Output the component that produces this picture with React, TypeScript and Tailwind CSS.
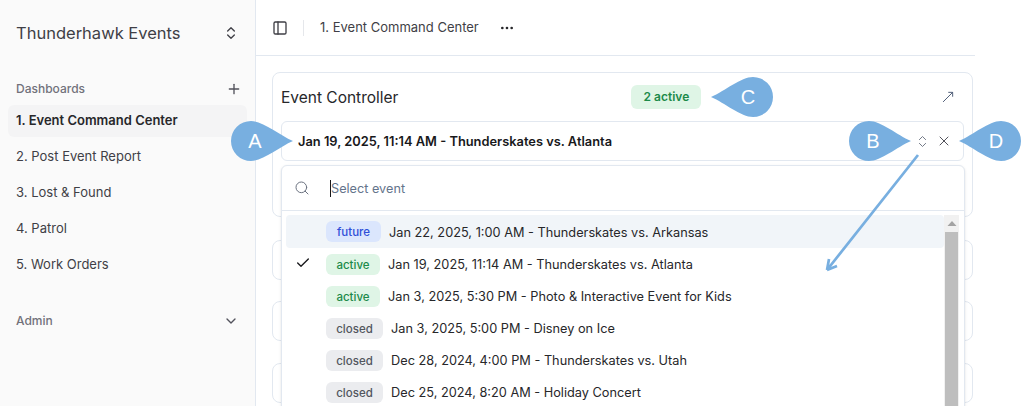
import { Check, ChevronDown, ChevronsUpDown, MoreHorizontal, MoveUpRight, PanelLeft, Plus, Search, X } from "lucide-react";

const navItems = ["1. Event Command Center", "2. Post Event Report", "3. Lost & Found", "4. Patrol", "5. Work Orders"];

const events = [
  { status: "future", label: "Jan 22, 2025, 1:00 AM - Thunderskates vs. Arkansas" },
  { status: "active", label: "Jan 19, 2025, 11:14 AM - Thunderskates vs. Atlanta" },
  { status: "active", label: "Jan 3, 2025, 5:30 PM - Photo & Interactive Event for Kids" },
  { status: "closed", label: "Jan 3, 2025, 5:00 PM - Disney on Ice" },
  { status: "closed", label: "Dec 28, 2024, 4:00 PM - Thunderskates vs. Utah" },
  { status: "closed", label: "Dec 25, 2024, 8:20 AM - Holiday Concert" },
];

function StatusBadge({ status }: { status: string }) {
  const badgeClass =
    status === "future"
      ? "bg-[#dbe6fd] text-[#2f4fd8] w-[55px]"
      : status === "active"
      ? "bg-[#dff5e6] text-[#1c8a4a] w-[54px]"
      : "bg-[#ebecef] text-[#52565e] w-[57px]";
  return (
    <span className={`flex h-[21px] shrink-0 items-center justify-center rounded-md pt-[3px] text-[11.5px] font-medium ${badgeClass}`}>
      {status}
    </span>
  );
}

// teardrop marker, the tip points at the thing it labels
function Callout({ letter, tip, className }: { letter: string; tip: "left" | "right"; className: string }) {
  const d =
    tip === "right"
      ? "M20 0C32 0 48 14 62 20C48 26 32 40 20 40A20 20 0 0 1 20 0Z"
      : "M42 0C30 0 14 14 0 20C14 26 30 40 42 40A20 20 0 0 0 42 0Z";
  return (
    <div className={`absolute flex h-10 w-[62px] items-center justify-center ${className}`}>
      <svg width="62" height="40" viewBox="0 0 62 40" className="absolute inset-0">
        <path d={d} fill="#78afe0" />
      </svg>
      <span
        className={`relative text-[20px] leading-none text-white font-['Liberation_Sans',sans-serif] ${
          tip === "right" ? "mr-[14px]" : "ml-[12px]"
        }`}
      >
        {letter}
      </span>
    </div>
  );
}

export default function App() {
  return (
    <div className="relative flex h-[406px] w-[1022px] overflow-hidden bg-white font-['Inter',sans-serif] text-[#18181b]">
      <aside className="flex w-[256px] shrink-0 flex-col border-r border-[#e2e8f0] bg-[#fafafa] px-2">
        <div className="flex h-[66px] items-center justify-between pl-2 pr-[8px]">
          <span className="text-[16.5px] text-[#3f3f46]">Thunderhawk Events</span>
          <ChevronsUpDown className="h-4 w-4 text-[#3f3f46]" />
        </div>
        <div className="mt-[7px] flex h-8 items-center justify-between pl-2 pr-[5px] text-xs font-medium text-[#71717a]">
          <span>Dashboards</span>
          <Plus className="h-4 w-4 text-[#52525b]" />
        </div>
        <nav className="flex flex-col gap-1">
          {navItems.map((item, i) => (
            <div
              key={item}
              className={`flex h-8 items-center rounded-md px-2 text-[13px] ${
                i === 0 ? "bg-[#f4f4f5] font-semibold text-[#27272a]" : "text-[#3f3f46]"
              }`}
            >
              {item}
            </div>
          ))}
        </nav>
        <div className="mt-[24px] flex h-8 items-center justify-between pl-2 pr-[8px] text-xs font-medium text-[#71717a]">
          <span>Admin</span>
          <ChevronDown className="h-4 w-4 text-[#52525b]" />
        </div>
      </aside>

      <main className="relative w-[719px] shrink-0">
        <header className="flex h-[56px] items-center border-b border-[#e2e8f0] pl-4">
          <PanelLeft className="h-4 w-4 text-[#3f3f46]" />
          <div className="ml-[15px] mr-4 h-4 w-px bg-[#e5e7eb]" />
          <span className="pt-px text-[13px] text-[#3f3f46]">1. Event Command Center</span>
          <MoreHorizontal className="ml-[20px] h-4 w-4 text-[#27272a]" />
        </header>

        <div className="flex flex-col gap-[21px] pl-4 pr-[2px] pt-4">
          <section className="h-[145px] rounded-lg border border-[#e2e8f0] px-[8px]">
            <div className="flex h-[48px] items-center">
              <h2 className="pt-px text-[15.5px] text-[#27272a]">Event Controller</h2>
              <span className="ml-[233px] flex h-6 w-[70px] items-center justify-center rounded-md bg-[#dff5e6] text-xs font-semibold text-[#1c8a4a]">
                2 active
              </span>
              <MoveUpRight className="ml-auto mr-[8px] h-4 w-4 text-[#52607a]" strokeWidth={1.5} />
            </div>
            <div className="flex h-10 items-center justify-between rounded-md border border-[#e2e8f0] pl-[16px] pr-[11px]">
              <span className="pt-px text-[12.85px] font-semibold text-[#18181b]">Jan 19, 2025, 11:14 AM - Thunderskates vs. Atlanta</span>
              <div className="flex items-center gap-[6px]">
                <ChevronsUpDown className="h-[15px] w-[15px] text-[#6b7280]" strokeWidth={1.5} />
                <X className="h-4 w-4 text-[#52525b]" strokeWidth={1.5} />
              </div>
            </div>
          </section>
          <div className="mt-[2px] h-[40px] rounded-lg border border-[#e2e8f0]" />
          <div className="h-[40px] rounded-lg border border-[#e2e8f0]" />
          <div className="mt-px h-[40px] rounded-lg border border-[#e2e8f0]" />
        </div>

        {/* open event picker, floats above the cards */}
        <div className="absolute left-[25px] top-[165px] w-[684px] rounded-t-md border border-[#e2e8f0] bg-white shadow-sm">
          <div className="flex h-[45px] items-center border-b border-[#e2e8f0] pl-[12px]">
            <Search className="h-4 w-4 text-[#6b7280]" strokeWidth={1.5} />
            <span className="ml-[20px] h-[17px] w-px bg-[#18181b]" />
            <span className="pt-[2px] text-[12.7px] text-[#64748b]">Select event</span>
          </div>
          <div className="flex pl-1 pt-1">
            <ul className="flex w-[658px] flex-col">
              {events.map((event, i) => (
                <li
                  key={event.label}
                  className={`relative flex shrink-0 items-center gap-2 rounded-sm pl-[40px] text-[12.75px] text-[#27272a] ${
                    i === 0 ? "h-[33px] bg-[#f1f5f9]" : "h-8"
                  }`}
                >
                  {i === 1 && <Check className="absolute left-[9px] top-[7px] h-4 w-4 text-[#18181b]" />}
                  <StatusBadge status={event.status} />
                  <span className="pt-[2px]">{event.label}</span>
                </li>
              ))}
            </ul>
            <div className="flex h-[192px] w-[15px] flex-col items-center bg-[#f1f1f1]">
              <svg width="10" height="17" viewBox="0 0 10 17" className="shrink-0">
                <path d="M0.5 11L5 6L9.5 11Z" fill="#a3a3a3" />
              </svg>
              <div className="w-[13px] flex-1 bg-[#bebebe]" />
            </div>
          </div>
        </div>
      </main>

      <Callout letter="A" tip="right" className="left-[231px] top-[121px]" />
      <Callout letter="B" tip="right" className="left-[849px] top-[121px]" />
      <Callout letter="C" tip="left" className="left-[711px] top-[77px]" />
      <Callout letter="D" tip="left" className="left-[959px] top-[121px]" />

      <svg className="absolute inset-0" width="1022" height="406" viewBox="0 0 1022 406" fill="none">
        <path d="M918 155L827 270M827 270L829 259M827 270L837 266" stroke="#78afe0" strokeWidth="2.7" />
      </svg>
    </div>
  );
}
